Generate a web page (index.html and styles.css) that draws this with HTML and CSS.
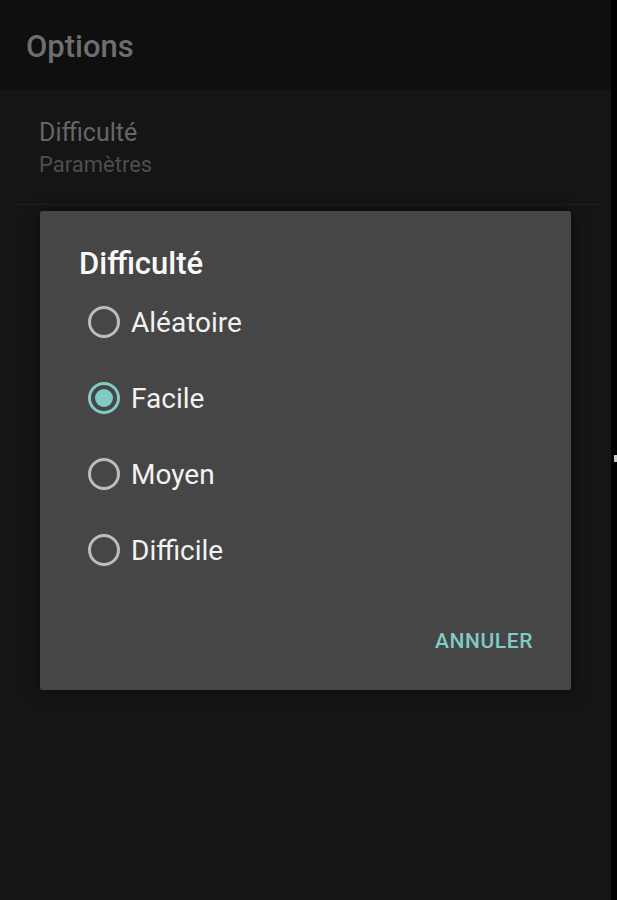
FILE: index.html
```html
<!DOCTYPE html>
<html lang="fr">
<head>
    <meta charset="UTF-8">
    <meta name="viewport" content="width=device-width, initial-scale=1.0">
    <title>Options</title>
    <link rel="stylesheet" href="styles.css">
</head>
<body>
    <div class="screen">
        <div class="main">
            <header class="app-bar">
                <h1>Options</h1>
            </header>
            <div class="pref-list">
                <div class="pref-item">
                    <div class="pref-title">Difficulté</div>
                    <div class="pref-summary">Paramètres</div>
                </div>
            </div>

            <div class="overlay">
                <div class="dialog">
                    <h2>Difficulté</h2>
                    <ul class="choices">
                        <li class="choice"><span class="radio"></span>Aléatoire</li>
                        <li class="choice checked"><span class="radio"></span>Facile</li>
                        <li class="choice"><span class="radio"></span>Moyen</li>
                        <li class="choice"><span class="radio"></span>Difficile</li>
                    </ul>
                    <div class="dialog-buttons">
                        <button>ANNULER</button>
                    </div>
                </div>
            </div>
        </div>
        <div class="edge">
            <span class="edge-mark"></span>
        </div>
    </div>
</body>
</html>
```

FILE: styles.css
```css
body {
    margin: 0;
    padding: 0;
    background-color: #151515;
    font-family: Roboto, "Liberation Sans", sans-serif;
}
.screen {
    display: flex;
    height: 900px;
}
.main {
    position: relative;
    flex: 1;
    background-color: #151515;
}
.edge {
    width: 6px;
    background-color: #000;
    display: flex;
    flex-direction: column;
}
.edge-mark {
    margin-top: 455px;
    margin-left: 3px;
    width: 3px;
    height: 7px;
    background-color: #c8c8c8;
}
.app-bar {
    height: 90px;
    box-sizing: border-box;
    background-color: #0f0f0f;
    padding: 27px 0 0 26px;
}
.app-bar h1 {
    margin: 0;
    font-size: 31px;
    line-height: 40px;
    font-weight: 500;
    color: #6e6e6e;
}
.pref-list {
    padding: 0 11px 0 12px;
}
.pref-item {
    padding: 28px 0 25px 27px;
    border-bottom: 1px solid #1f1f1f;
}
.pref-title {
    font-size: 25px;
    line-height: 30px;
    color: #666;
}
.pref-summary {
    font-size: 22px;
    line-height: 28px;
    margin-top: 3px;
    color: #4e4e4e;
}

/* Dialog */
.overlay {
    position: absolute;
    top: 211px;
    left: 40px;
}
.dialog {
    width: 531px;
    height: 479px;
    box-sizing: border-box;
    background-color: #464646;
    border-radius: 2px;
    box-shadow: 0 2px 16px rgba(0, 0, 0, 0.5);
    padding-top: 35px;
    display: flex;
    flex-direction: column;
}
.dialog h2 {
    margin: 0 0 2px 39px;
    font-size: 31px;
    line-height: 36px;
    font-weight: 500;
    color: #fafafa;
}
.choices {
    list-style: none;
    margin: 0;
    padding: 0;
}
.choice {
    height: 76px;
    display: flex;
    align-items: center;
    padding-left: 48px;
    gap: 11px;
    font-size: 28px;
    color: #f2f2f2;
}
.radio {
    width: 32px;
    height: 32px;
    flex-shrink: 0;
    box-sizing: border-box;
    border: 3px solid #bdbdbd;
    border-radius: 50%;
    display: flex;
    align-items: center;
    justify-content: center;
}
.checked .radio {
    border-color: #80cbc4;
}
.checked .radio::after {
    content: "";
    width: 18px;
    height: 18px;
    border-radius: 50%;
    background-color: #80cbc4;
}
.dialog-buttons {
    flex: 1;
    display: flex;
    justify-content: flex-end;
    align-items: center;
    padding: 4px 38px 0 0;
}
.dialog-buttons button {
    background: none;
    border: none;
    padding: 0;
    font-family: Roboto, "Liberation Sans", sans-serif;
    font-size: 21px;
    font-weight: 500;
    letter-spacing: 0.6px;
    color: #80cbc4;
}
```
